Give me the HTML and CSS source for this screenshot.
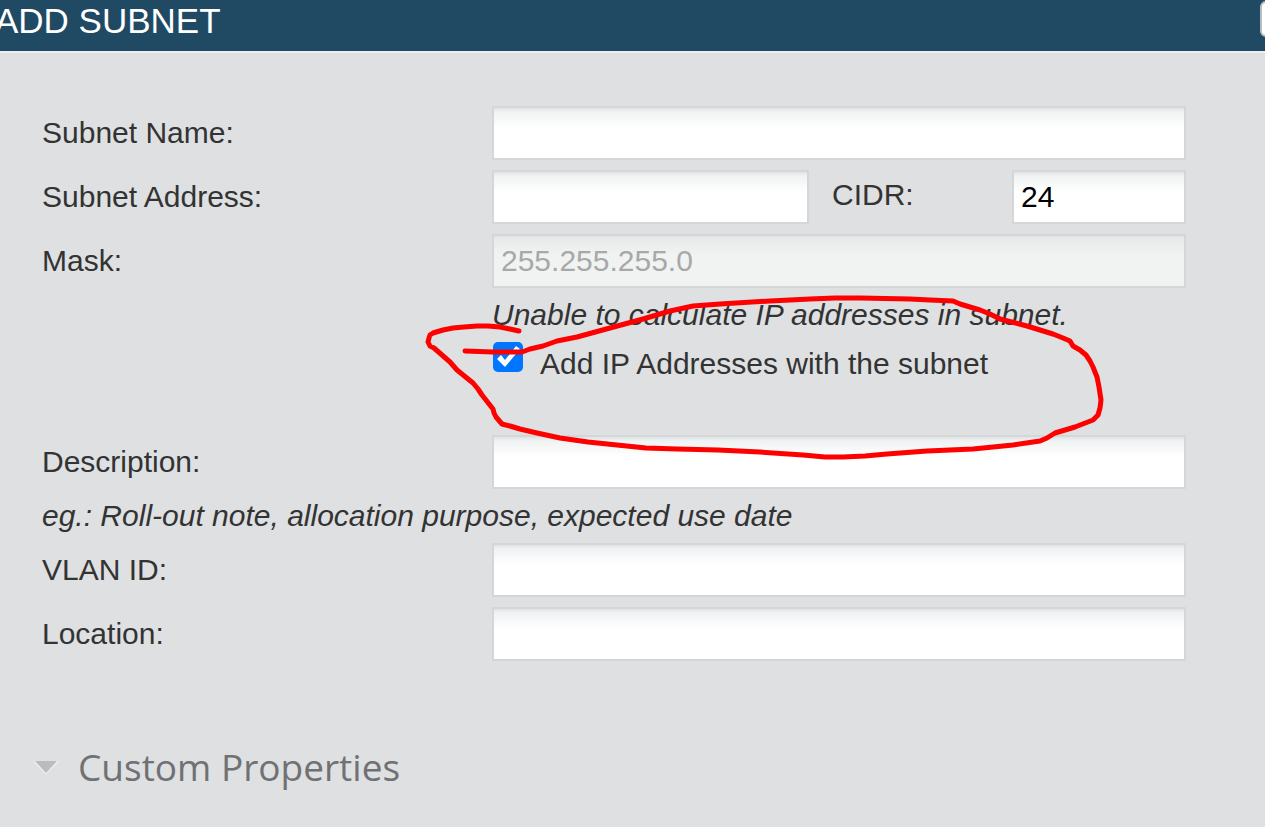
FILE: index.html
```html
<!DOCTYPE html>
<html lang="en">
<head>
    <meta charset="UTF-8">
    <meta name="viewport" content="width=device-width, initial-scale=1.0">
    <title>Add Subnet</title>
    <link rel="stylesheet" href="styles.css">
</head>
<body>

    <div class="dialog">
        <!-- Title bar -->
        <header class="dialog-header">
            <h1 class="dialog-title">ADD SUBNET</h1>
            <button type="button" class="dialog-close" aria-label="Close"></button>
        </header>

        <!-- Subnet fields -->
        <form class="subnet-form">
            <div class="row">
                <label for="name">Subnet Name:</label>
                <input type="text" class="field" id="name">
            </div>
            <div class="row">
                <label for="address">Subnet Address:</label>
                <div class="address-group">
                    <input type="text" class="field" id="address">
                    <label class="cidr-label" for="cidr">CIDR:</label>
                    <input type="text" class="field" id="cidr" value="24">
                </div>
            </div>
            <div class="row">
                <label for="mask">Mask:</label>
                <input type="text" class="field" id="mask" value="255.255.255.0" disabled>
            </div>
            <p class="hint hint-indent">Unable to calculate IP addresses in subnet.</p>
            <div class="check-row">
                <input type="checkbox" class="check" id="add-ips" checked>
                <label class="check-label" for="add-ips">Add IP Addresses with the subnet</label>
            </div>
            <div class="row">
                <label for="description">Description:</label>
                <input type="text" class="field" id="description">
            </div>
            <p class="hint">eg.: Roll-out note, allocation purpose, expected use date</p>
            <div class="row">
                <label for="vlan">VLAN ID:</label>
                <input type="text" class="field" id="vlan">
            </div>
            <div class="row">
                <label for="location">Location:</label>
                <input type="text" class="field" id="location">
            </div>
        </form>

        <!-- Collapsible section -->
        <button type="button" class="section-toggle">
            <svg class="arrow" width="28" height="16" viewBox="0 0 28 16" aria-hidden="true">
                <path d="M2 2L14 14L26 2" fill="none" stroke="#eeeeee" stroke-width="2"/>
                <path d="M3 2H25L14 14Z" fill="#bcbcbc"/>
            </svg>
            Custom Properties
        </button>

        <!-- Red pen mark around the checkbox -->
        <svg class="pen-mark" width="700" height="180" viewBox="420 286 700 180" aria-hidden="true">
            <polyline points="519,331 510,329 500,327 488,326 477,326 464,327 453,328 443,330 433,333 430,335 429,338 428,342 430,346 434,348 450,362 457,370 473,383 478,389 482,395 493,409 494,413 496,417 502,424 510,426 520,429 537,433 560,438 588,442 617,445 646,448 677,449 718,450 760,452 803,455 825,457 843,457 865,456 887,454 927,451 973,449 1013,445 1040,441 1047,438 1055,433 1075,427 1093,420 1098,415 1100,408 1101,400 1099,387 1097,377 1093,367 1090,361 1086,355 1080,350 1073,346 1070,341 1063,338 1053,334 1027,326 1000,319 990,314 980,310 970,307 960,304 953,301 930,300 910,299 860,298 835,298 810,299 770,301 720,304 693,306 670,311 643,319 610,328 577,337 557,341 543,346 530,349 522,352 508,352 493,352 465,351"/>
        </svg>
    </div>

</body>
</html>
```
FILE: styles.css
```css
* {
    box-sizing: border-box;
}

body {
    margin: 0;
    min-height: 100vh;
    background-color: #dee0e2;
    color: #333;
    font-family: "Liberation Sans", Arial, sans-serif;
    font-size: 30px;
    line-height: 34px;
}

.dialog {
    position: relative;
    overflow: hidden;
}

/* Title bar */
.dialog-header {
    display: flex;
    justify-content: space-between;
    align-items: flex-start;
    height: 53px;
    background-color: #204a63;
    border-bottom: 2px solid #e8eef2;
}

.dialog-title {
    margin: 0 0 0 -5px;
    color: #fff;
    font-size: 35px;
    font-weight: normal;
    line-height: 42px;
}

.dialog-close {
    width: 36px;
    height: 36px;
    margin: 1px -31px 0 0;
    padding: 0;
    background-color: #fff;
    border: 2px solid #b9bcbe;
    border-radius: 6px;
}

/* Form */
.subnet-form {
    display: flex;
    flex-direction: column;
    gap: 10px;
    padding: 53px 79px 0 42px;
}

.row {
    display: grid;
    grid-template-columns: 450px 1fr;
    align-items: center;
}

.field {
    width: 100%;
    min-width: 0;
    height: 54px;
    padding: 0 7px;
    background: linear-gradient(#e0e4e6, #f0f3f3 4px, #fff 20px);
    border: 2px solid #d5d6d7;
    border-radius: 0;
    color: #000;
    font: inherit;
}

.field:disabled {
    background: linear-gradient(#e2e5e6, #e9ebeb 4px, #f1f3f3 20px);
    color: #a8a8a8;
}

.address-group {
    display: grid;
    grid-template-columns: 1fr 157px 174px;
    align-items: center;
    column-gap: 23px;
}

.cidr-label {
    padding-bottom: 4px;
}

.hint {
    margin: 0;
    font-style: italic;
}

.hint-indent {
    margin-left: 450px;
}

.check-row {
    display: flex;
    align-items: flex-start;
    min-height: 83px;
    margin-left: 450px;
}

.check {
    appearance: none;
    flex: none;
    width: 30px;
    height: 30px;
    margin: 0 17px 0 1px;
    background-color: #0075ff;
    border-radius: 5px;
}

.check:checked::before {
    content: "";
    display: block;
    width: 30px;
    height: 30px;
    background-color: #fff;
    clip-path: polygon(4px 17px, 8px 13px, 12px 18px, 23px 4px, 27px 7px, 12px 25px);
}

.check-label {
    padding-top: 5px;
}

/* Custom properties */
.section-toggle {
    display: flex;
    align-items: center;
    gap: 18px;
    margin: 79px 0 32px 32px;
    padding: 0;
    background: none;
    border: 0;
    color: #707173;
    font-family: "Open Sans", sans-serif;
    font-size: 37px;
    line-height: 54px;
}

/* Hand drawn circle lies over the form */
.pen-mark {
    position: absolute;
    top: 286px;
    left: 420px;
    pointer-events: none;
    fill: none;
    stroke: #f00;
    stroke-width: 5;
    stroke-linecap: round;
    stroke-linejoin: round;
}
```
